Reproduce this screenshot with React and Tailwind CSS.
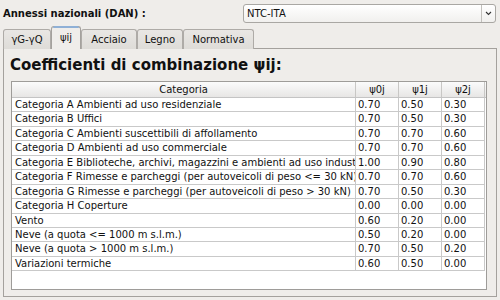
const rows = [
  ['Categoria A Ambienti ad uso residenziale', '0.70', '0.50', '0.30'],
  ['Categoria B Uffici', '0.70', '0.50', '0.30'],
  ['Categoria C Ambienti suscettibili di affollamento', '0.70', '0.70', '0.60'],
  ['Categoria D Ambienti ad uso commerciale', '0.70', '0.70', '0.60'],
  ['Categoria E Biblioteche, archivi, magazzini e ambienti ad uso industriale', '1.00', '0.90', '0.80'],
  ['Categoria F Rimesse e parcheggi (per autoveicoli di peso <= 30 kN)', '0.70', '0.70', '0.60'],
  ['Categoria G Rimesse e parcheggi (per autoveicoli di peso > 30 kN)', '0.70', '0.50', '0.30'],
  ['Categoria H Coperture', '0.00', '0.00', '0.00'],
  ['Vento', '0.60', '0.20', '0.00'],
  ['Neve (a quota <= 1000 m s.l.m.)', '0.50', '0.20', '0.00'],
  ['Neve (a quota > 1000 m s.l.m.)', '0.70', '0.50', '0.20'],
  ['Variazioni termiche', '0.60', '0.50', '0.00'],
];

const tabs = [
  { label: 'γG-γQ', w: 'w-[48px]' },
  { label: 'ψij', w: 'w-[30px]' },
  { label: 'Acciaio', w: 'w-[56px]' },
  { label: 'Legno', w: 'w-[46px]' },
  { label: 'Normativa', w: 'w-[71px]' },
];

function Tab({ label, w, active }) {
  if (active) {
    return (
      <div className={`relative z-10 flex h-[23px] items-center justify-center rounded-t-[3px] border border-b-0 border-[#a4a19d] bg-[#efedea] pb-[2px] ${w}`}>
        <div className="absolute -top-[1px] left-[1px] right-[1px] h-[2px] rounded-t-[2px] bg-[#8fb0d6]" />
        {label}
      </div>
    );
  }
  return (
    <div className={`flex h-[20px] items-center justify-center rounded-t-[3px] border border-b-0 border-[#aeaba7] bg-gradient-to-b from-[#e9e7e4] to-[#dedcd8] ${w}`}>
      {label}
    </div>
  );
}

export default function App() {
  return (
    <div className="h-[300px] w-[500px] overflow-hidden bg-[#efedea] text-[10px] text-[#111] [font-family:'DejaVu_Sans',sans-serif]">
      <div className="mt-[4px] flex h-[19px] items-center pl-[3px] pr-[4px]">
        <span className="text-[10px] font-bold">Annessi nazionali (DAN) :</span>
        <div className="ml-auto flex h-[19px] w-[253px] items-center rounded-[3px] border border-[#a9a7a3] bg-gradient-to-b from-white to-[#f1f0ee]">
          <span className="flex-1 pl-[3px]">NTC-ITA</span>
          <div className="flex h-full w-[14px] items-center justify-center border-l border-[#c2c0bc]">
            <svg width="7" height="5" viewBox="0 0 7 5">
              <path d="M1 1 L3.5 3.5 L6 1" fill="none" stroke="#333" strokeWidth="1.1" />
            </svg>
          </div>
        </div>
      </div>

      <div className="mt-[4px] flex h-[22px] items-end pl-[3px]">
        {tabs.map((t) => (
          <Tab key={t.label} label={t.label} w={t.w} active={t.label === 'ψij'} />
        ))}
      </div>

      <div className="mx-[3px] -mt-[1px] h-[249px] border border-[#a4a19d] bg-[#efedea]">
        <div className="pl-[6px] pt-[7px] text-[15px] font-bold leading-[18px]">
          Coefficienti di combinazione ψij:
        </div>
        <div className="ml-[7px] mt-[7px] h-[209px] w-[476px] border border-[#9e9c99] bg-white">
          <div className="flex h-[16px] border-b border-[#c4c4c4] bg-gradient-to-b from-[#fbfbfb] to-[#e7e6e5] leading-[15px]">
            <div className="w-[344px] border-r border-[#c8c7c5] text-center">Categoria</div>
            <div className="w-[43px] border-r border-[#c8c7c5] text-center">ψ0j</div>
            <div className="w-[43px] border-r border-[#c8c7c5] text-center">ψ1j</div>
            <div className="w-[43px] border-r border-[#c8c7c5] text-center">ψ2j</div>
          </div>
          {rows.map((r) => (
            <div key={r[0]} className="flex h-[14.45px] w-[473px] border-b border-[#c9c9c9] leading-[13px]">
              <div className="w-[344px] overflow-hidden whitespace-nowrap border-r border-[#c9c9c9] pl-[3px]">{r[0]}</div>
              <div className="w-[43px] border-r border-[#c9c9c9] pl-[2px]">{r[1]}</div>
              <div className="w-[43px] border-r border-[#c9c9c9] pl-[2px]">{r[2]}</div>
              <div className="w-[43px] border-r border-[#c9c9c9] pl-[2px]">{r[3]}</div>
            </div>
          ))}
        </div>
      </div>
    </div>
  );
}
